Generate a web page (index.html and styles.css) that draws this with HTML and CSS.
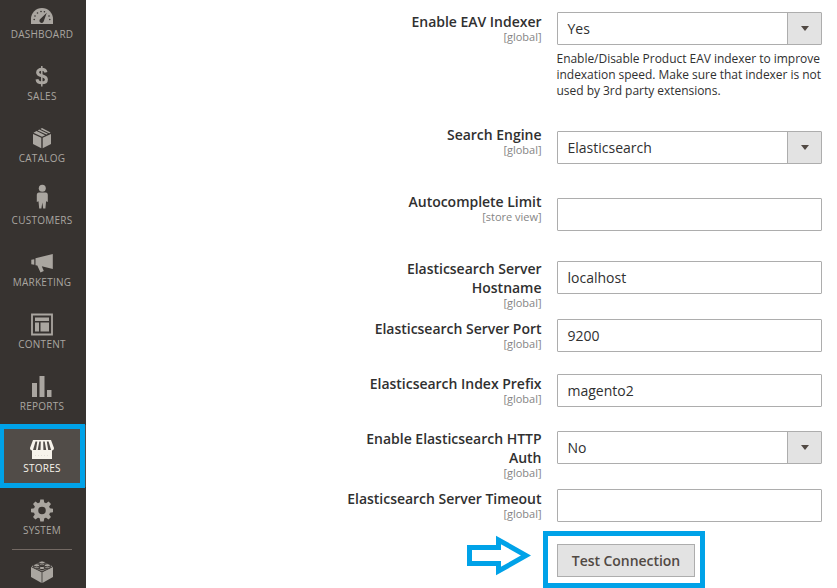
FILE: index.html
```html
<!DOCTYPE html>
<html lang="en">
<head>
<meta charset="utf-8">
<title>Catalog Search Configuration</title>
<link rel="stylesheet" href="styles.css">
</head>
<body>
<div class="page">
  <nav class="menu">
    <a class="item"><svg class="icon" viewBox="0 -1 24 24"><path fill="currentColor" d="M1 20v-5a11 11 0 0 1 22 0v5z"/><g fill="#373330"><circle cx="4.2" cy="15.5" r=".8"/><circle cx="5" cy="12" r=".8"/><circle cx="7.5" cy="9" r=".8"/><circle cx="11" cy="7.5" r=".8"/><circle cx="14.4" cy="7.8" r=".8"/><circle cx="19" cy="12" r=".8"/><circle cx="19.8" cy="15.5" r=".8"/><path d="M16.8 8.7l-3 8.3a2.2 2.2 0 1 1-3.3-2.2z"/></g></svg><span>Dashboard</span></a>
    <a class="item"><svg class="icon" viewBox="0 1 24 24"><path fill="none" stroke="currentColor" stroke-width="3" d="M16 8.3c-.5-2.2-2-3-4.300-3S7.600 6.400 7.600 8.400c0 4.500 8.800 2.200 8.800 7 0 2.200-1.800 3.400-4.600 3.400s-4.500-1.200-4.800-3.600"/><path stroke="currentColor" stroke-width="1.500" d="M11.800 2v20.500"/></svg><span>Sales</span></a>
    <a class="item"><svg class="icon" viewBox="0 1 24 24"><path fill="currentColor" d="M3 8l8.300 3.800v10.400L3 18zM21 8l-8.300 3.800v10.400L21 18zM3.500 6.700l3-1.700 8.700 4.200-3.200 1.500zM7.700 4.400l1.500-.8 8.700 4.200-1.500.8zM10.400 3l1.600-.9 8.600 4.500-1.500.7z"/></svg><span>Catalog</span></a>
    <a class="item"><svg class="icon customer" viewBox="0 4 24 24"><circle cx="12.300" cy="3.200" r="3.500" fill="currentColor"/><path fill="currentColor" d="M9 7.400h6.700c1.500 0 2.100 1 2.100 2.500v7l-1.700-.7-.7 7.300h-2.200l-.9-6-.9 6H9.200l-.7-7.300-1.700.7v-7C6.800 8.400 7.500 7.400 9 7.400z"/></svg><span>Customers</span></a>
    <a class="item"><svg class="icon" viewBox="0 1 24 24"><path fill="currentColor" d="M1.300 9.700l3-.5v5.600l-3-.5zM5.500 8.300L22.800 4v15l-11-2.700 2 4.600-3.300 1.500-3.200-6.800-1.800-.4z"/></svg><span>Marketing</span></a>
    <a class="item"><svg class="icon" viewBox="0 1 24 24"><path fill="none" stroke="currentColor" stroke-width="1.800" d="M2 2.500h20v20H2z"/><path fill="currentColor" d="M5 5.500h14V9H5zM5 10.500h4v9H5zM10.500 10.500H19v9h-8.500z"/></svg><span>Content</span></a>
    <a class="item"><svg class="icon" viewBox="0 1 24 24"><path fill="currentColor" d="M2 9H7v14H2zM9.500 2h5v21h-5zM17 16h4.500v7H17z"/></svg><span>Reports</span></a>
    <a class="item active"><svg class="icon" viewBox="0 0 24 24"><path fill="currentColor" d="M3 3h18l3 8c0 1.600-.8 2.500-2 2.500v8.500H2v-8.500c-1.200 0-2-.9-2-2.500z"/><path fill="#514c48" d="M5.500 4.500h1.800L6 13H3zM9.300 4.500h1.500l-.3 8.500H7.700zM13.200 4.500h1.500l1.500 8.500h-2.800zM16.800 4.500h1.800l2.500 8.500h-2.900z"/><path stroke="#d9d4cf" stroke-width=".7" stroke-dasharray="1 2" d="M5 18.500h15"/></svg><span>Stores</span></a>
    <a class="item"><svg class="icon" viewBox="0 .5 24 24"><g fill="currentColor"><path id="teeth" d="M10.300 1h3.400l.9 5h-5.200zM10.300 23h3.400l.9-5h-5.200zM1 10.300v3.400l5 .9V9.400zM23 10.300v3.400l-5 .9V9.400z"/><use href="#teeth" transform="rotate(45 12 12)"/></g><circle cx="12" cy="12" r="6" fill="none" stroke="currentColor" stroke-width="4.500"/></svg><span>System</span></a>
    <div class="divider"></div>
    <svg class="icon partners" viewBox="0 .5 24 24"><path fill="currentColor" d="M1 7.500l10.600 5.200v10.700L1 17.500zM23 7.500l-10.600 5.200v10.700L23 17.500zM1.500 6.800L12 1.500l10.500 5.300L12 12z"/><g fill="currentColor" stroke="#373330" stroke-width="1"><path d="M9 3v1.700c0 2 6 2 6 0V3"/><ellipse cx="12" cy="3" rx="3" ry="1.600"/><path d="M3.700 5.800v1.700c0 2 6 2 6 0V5.800M14.300 5.800v1.700c0 2 6 2 6 0V5.800"/><ellipse cx="6.700" cy="5.800" rx="3" ry="1.600"/><ellipse cx="17.300" cy="5.800" rx="3" ry="1.600"/><path d="M9 8.500v1.700c0 2 6 2 6 0V8.500"/><ellipse cx="12" cy="8.500" rx="3" ry="1.600"/></g></svg>
    <div class="menu-highlight"></div>
  </nav>
  <main class="settings">
    <div class="row r-note"><div class="label">Enable EAV Indexer<small>[global]</small></div><div class="control"><div class="field select"><span>Yes</span><i></i></div><p class="note">Enable/Disable Product EAV indexer to improve indexation speed. Make sure that indexer is not used by 3rd party extensions.</p></div></div>
    <div class="row r-spaced"><div class="label">Search Engine<small>[global]</small></div><div class="control"><div class="field select"><span>Elasticsearch</span><i></i></div></div></div>
    <div class="row r-spaced"><div class="label">Autocomplete Limit<small>[store view]</small></div><div class="control"><div class="field"></div></div></div>
    <div class="row r-double"><div class="label">Elasticsearch Server<br>Hostname<small>[global]</small></div><div class="control"><div class="field"><span>localhost</span></div></div></div>
    <div class="row"><div class="label">Elasticsearch Server Port<small>[global]</small></div><div class="control"><div class="field"><span>9200</span></div></div></div>
    <div class="row"><div class="label">Elasticsearch Index Prefix<small>[global]</small></div><div class="control"><div class="field"><span>magento2</span></div></div></div>
    <div class="row r-double"><div class="label">Enable Elasticsearch HTTP<br>Auth<small>[global]</small></div><div class="control"><div class="field select"><span>No</span><i></i></div></div></div>
    <div class="row"><div class="label">Elasticsearch Server Timeout<small>[global]</small></div><div class="control"><div class="field"></div></div></div>
    <div class="row"><div class="label"></div><div class="control"><button class="test">Test Connection</button></div></div>
    <svg class="arrow" viewBox="0 0 66 42"><path fill="none" stroke="#00a2e8" stroke-width="5" d="M4.500 13.500h29V6L61 21.500 33.500 37v-7.500h-29z"/></svg>
    <div class="test-highlight"></div>
  </main>
</div>
</body>
</html>
```
FILE: styles.css
```css
* { box-sizing: border-box; }
body { margin: 0; background: #fff; color: #303030; font: 14px/19px "Open Sans", "Noto Sans", sans-serif; }
.page { display: flex; width: 837px; height: 588px; overflow: hidden; }
.menu { position: relative; width: 86px; flex: none; background: #373330; color: #aaa6a0; overflow: hidden; }
.item { display: flex; flex-direction: column; align-items: center; width: 84px; height: 62px; padding-top: 12px; font-size: 10px; line-height: 14px; letter-spacing: .25px; text-transform: uppercase; }
.item:first-child { margin-top: -9px; }
.icon { display: block; width: 24px; height: 24px; flex: none; }
.customer { overflow: visible; }
.item.active { width: 86px; padding-right: 2px; background: #514c48; color: #f7f3eb; }
.divider { width: 60px; height: 1px; margin: 0 0 10px 12px; background: #736963; }
.partners { margin-left: 30px; }
.menu-highlight { position: absolute; left: 0; top: 424px; width: 85px; height: 64px; border: 5px solid #00a2e8; border-left-width: 4px; }
.settings { position: relative; flex: 1; padding-top: 12px; }
.row { display: grid; grid-template-columns: 200.5px 265px; column-gap: 15.5px; margin-left: 255px; height: 55px; }
.r-note { height: 113px; }
.r-spaced { height: 67px; }
.r-double { height: 60px; }
.r-spaced .control { padding-top: 6px; }
.r-double .control { padding-top: 2px; }
.label { text-align: right; font-weight: 600; letter-spacing: -.02px; }
.label small { display: block; color: #858585; font-size: 11px; font-weight: 400; line-height: 12px; }
.field { display: flex; justify-content: space-between; width: 265px; height: 33px; border: 1px solid #adadad; border-radius: 1px; padding-left: 9.5px; line-height: 32px; }
.field i { display: flex; align-items: center; justify-content: center; width: 34px; background: #e3e3e3; border-left: 1px solid #adadad; }
.field i::after { content: ""; border: 4px solid transparent; border-top: 5px solid #514943; border-bottom: 0; }
.note { margin: 6px -10px 0 -.5px; width: 267px; font-size: 12px; line-height: 16px; letter-spacing: -.03px; }
.test { display: block; width: 138px; height: 33px; padding: 0; border: 1px solid #adadad; background: #e3e3e3; color: #514943; font: 600 14px/31px "Open Sans", "Noto Sans", sans-serif; letter-spacing: -.05px; }
.test-highlight { position: absolute; left: 457px; top: 531px; width: 162px; height: 57px; border: 5px solid #00a2e8; }
.arrow { position: absolute; left: 379px; top: 534px; width: 66px; height: 42px; }
```
